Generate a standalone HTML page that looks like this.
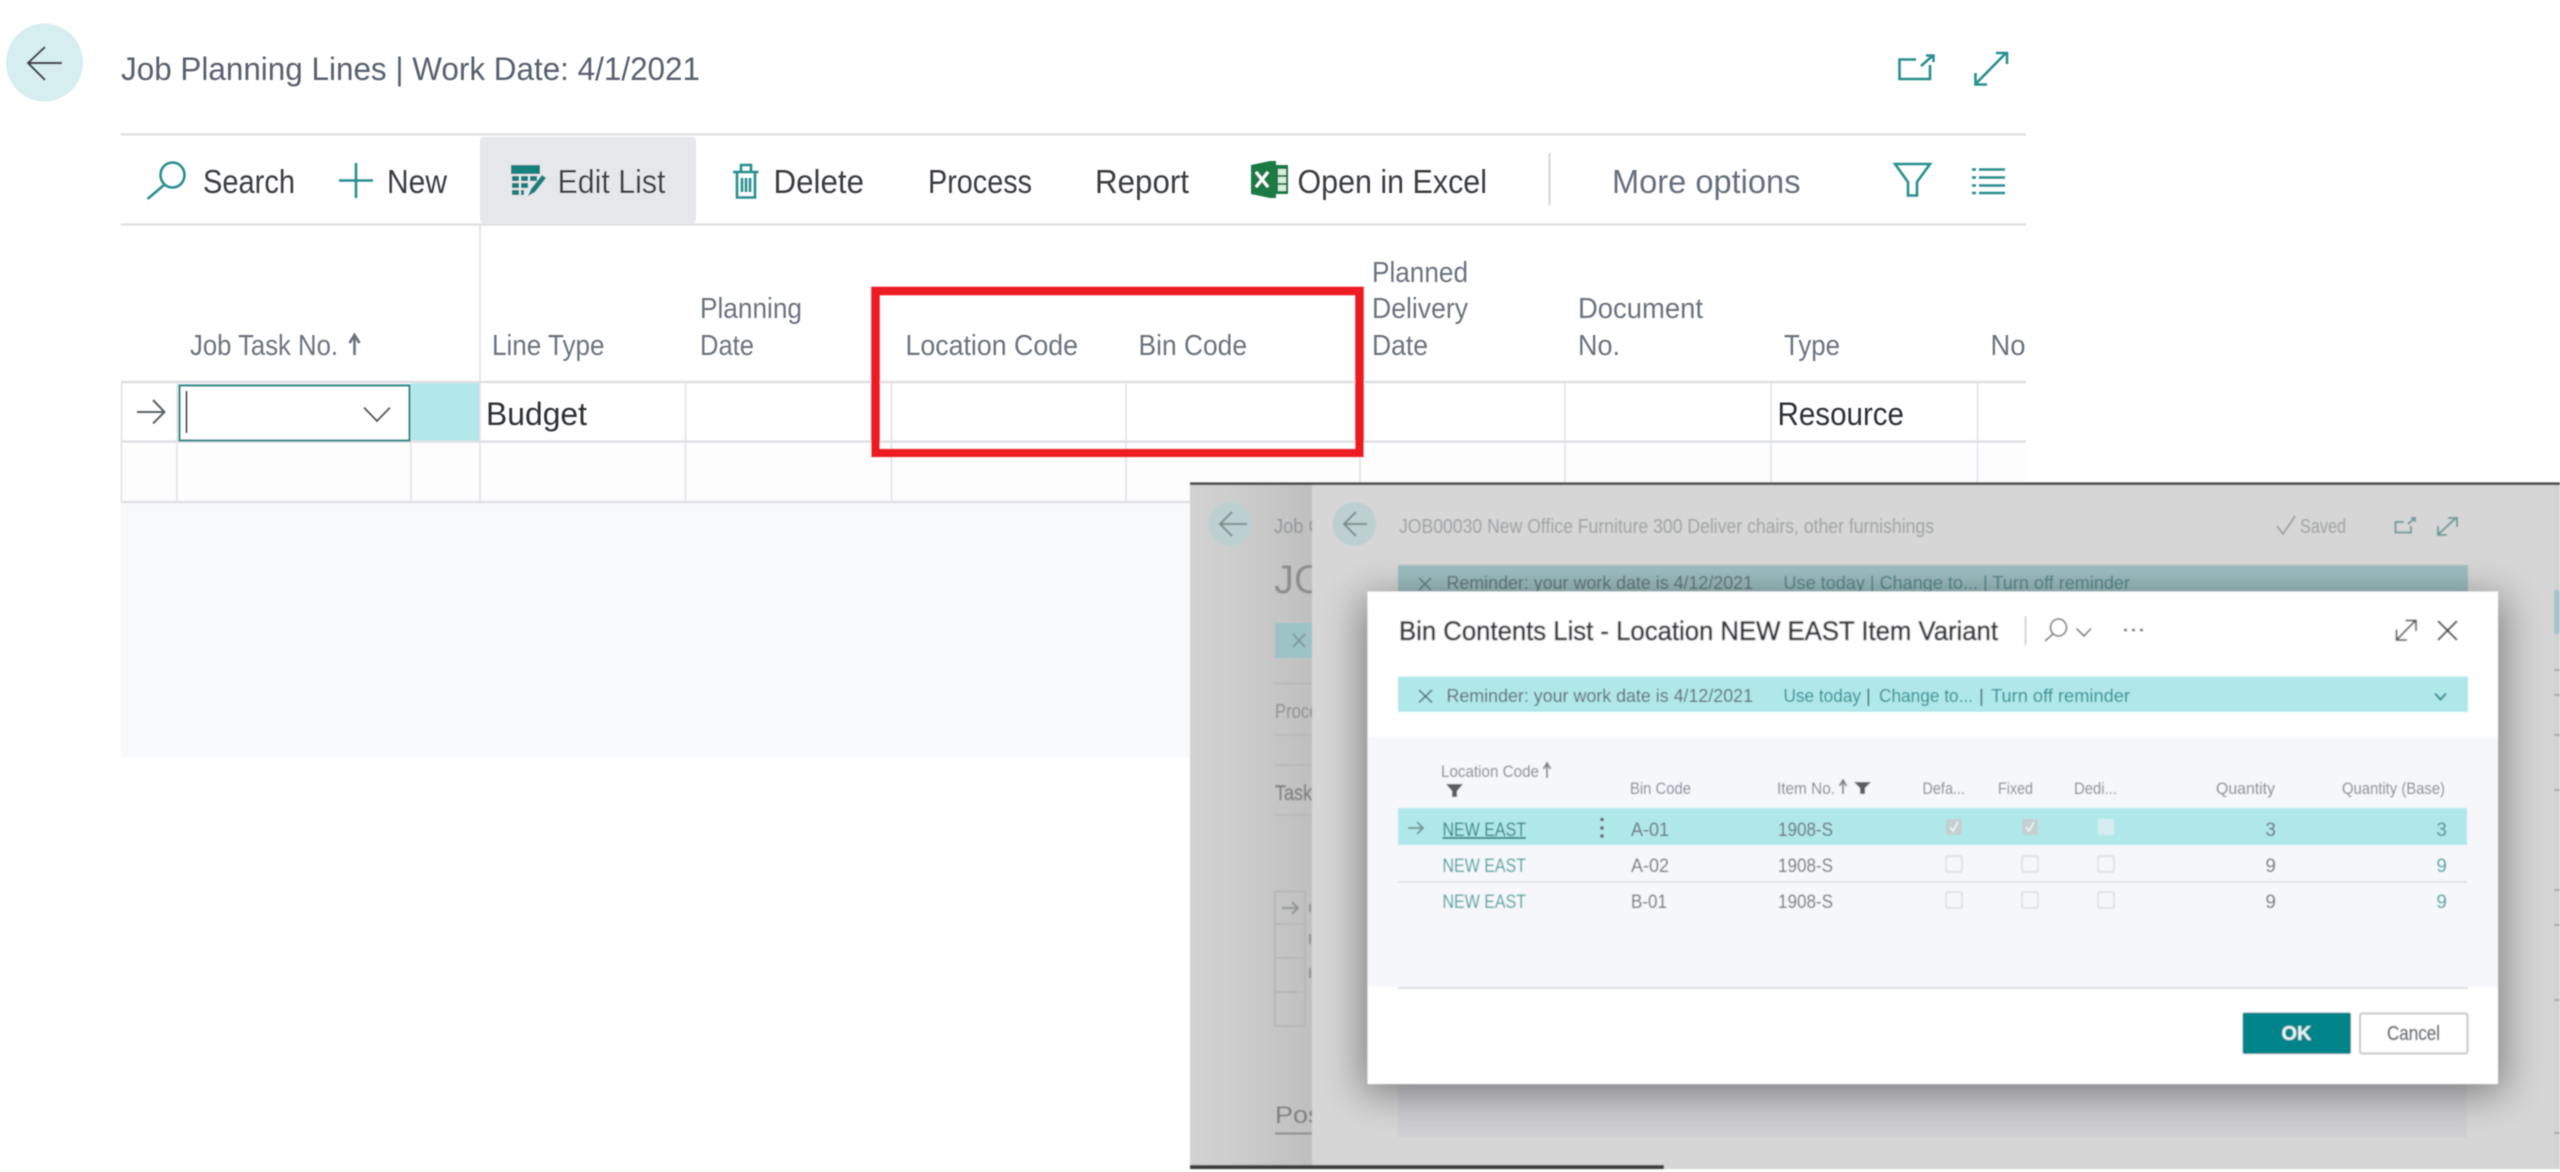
<!DOCTYPE html>
<html lang="en">
<head>
<meta charset="utf-8">
<title>Job Planning Lines</title>
<style>
html,body{margin:0;padding:0;background:#fff;width:2560px;height:1172px;overflow:hidden}
svg{display:block;position:absolute;left:0;top:0}
text{font-family:"Liberation Sans",sans-serif}
.tb{font-size:33px;fill:#3a3d42}
.hd{font-size:29px;fill:#6c7380}
.gr{font-size:32px;fill:#2f3136}
.ic{fill:none;stroke:#2b8f90;stroke-width:2.6}
.vl{stroke:#e2e3e6;stroke-width:1.6}
.hl{stroke:#e0e1e4;stroke-width:2.4}
.sm{font-size:17px;fill:#7b818b}
.rw{font-size:19px;fill:#666b72}
.ln{font-size:19px;fill:#2a9d9a}
.bk{font-size:20px;fill:#9b9fa1}
.rm{font-size:18.5px;fill:#5b6468}
.tl{font-size:18.5px;fill:#1d8a8c}
.cb{fill:#f5f7fa;stroke:#dfe1e4;stroke-width:2}
</style>
</head>
<body>
<svg width="2560" height="1172" viewBox="0 0 2560 1172" xmlns="http://www.w3.org/2000/svg">
<defs>
<linearGradient id="lp" x1="0" x2="1" y1="0" y2="0"><stop offset="0" stop-color="#d2d2d2"/><stop offset=".45" stop-color="#cbcbcb"/><stop offset="1" stop-color="#bfbfbf"/></linearGradient>
<filter id="sh" x="-10%" y="-20%" width="120%" height="140%"><feGaussianBlur stdDeviation="20"/></filter>
<filter id="s1"><feGaussianBlur stdDeviation=".55"/></filter>
<filter id="s2"><feGaussianBlur stdDeviation=".8"/></filter>
<clipPath id="cl"><rect x="1190" y="485" width="122" height="680"/></clipPath>
<clipPath id="cp"><rect x="1190" y="485" width="1370" height="683"/></clipPath>
</defs>

<g filter="url(#s1)">
<!-- header -->
<ellipse cx="44.5" cy="62.5" rx="38.5" ry="39" fill="#d6eef0"/>
<path d="M62,63H28M45,47L28,63L45,80" fill="none" stroke="#3d4347" stroke-width="2.2"/>
<text x="121" y="80" font-size="32" fill="#596170" textLength="579" lengthAdjust="spacingAndGlyphs">Job Planning Lines | Work Date: 4/1/2021</text>
<path class="ic" d="M1916,59.500H1899.500V79H1930V65"/>
<path class="ic" d="M1921,66L1933,55.500M1926,55.500H1933.500V62" stroke-width="2.200"/>
<path class="ic" d="M1975,84.500L2006.500,52.500M1996,53H2007V64M1975.500,73V84.500H1987"/>

<!-- toolbar -->
<line class="hl" x1="121" y1="134.500" x2="2026" y2="134.500"/>
<line class="hl" x1="121" y1="224.500" x2="2026" y2="224.500"/>
<rect x="480" y="137" width="216" height="86" rx="4" fill="#e6e7ea"/>
<ellipse class="ic" cx="172.500" cy="175" rx="12" ry="12.500"/>
<path class="ic" d="M164,185L147.500,199"/>
<text class="tb" x="203" y="193" textLength="92" lengthAdjust="spacingAndGlyphs">Search</text>
<path class="ic" d="M339,180.500H373M356,163V198"/>
<text class="tb" x="387" y="193" textLength="60" lengthAdjust="spacingAndGlyphs">New</text>
<g>
<rect x="511" y="165" width="29" height="9" fill="#16807f"/>
<path d="M512,176h7v5h-7zM521,176h7v5h-7zM530,176h7v5h-7zM512,183h7v5h-7zM521,183h7v5h-7zM512,190h7v5h-7zM521,190h3v5h-3z" fill="#16807f"/>
<path d="M528,196l3,-7l11,-14l4,3l-11,14z" fill="#16807f"/>
</g>
<text class="tb" x="557.500" y="193" textLength="108" lengthAdjust="spacingAndGlyphs">Edit List</text>
<path class="ic" d="M733,172H758.500M741,172V165H751V172M737,172V197.500H755V172M742,178V192M746,178V192M750,178V192" stroke-width="2"/>
<text class="tb" x="773.500" y="193" textLength="90.500" lengthAdjust="spacingAndGlyphs">Delete</text>
<text class="tb" x="928" y="193" textLength="104" lengthAdjust="spacingAndGlyphs">Process</text>
<text class="tb" x="1095" y="193" textLength="94" lengthAdjust="spacingAndGlyphs">Report</text>
<path d="M1251,165L1270,161H1276V198H1270L1251,194Z" fill="#1f7a45"/>
<rect x="1276" y="165" width="12" height="29" fill="#1f7a45"/>
<path d="M1278,169h8v6h-8zM1278,177h8v6h-8zM1278,185h8v6h-8z" fill="#d9ebdf"/>
<path d="M1256,172L1268,187M1268,172L1256,187" stroke="#fff" stroke-width="3" fill="none"/>
<text class="tb" x="1297.500" y="193" textLength="189.500" lengthAdjust="spacingAndGlyphs">Open in Excel</text>
<line x1="1549.500" y1="153" x2="1549.500" y2="205" stroke="#d2d4d7" stroke-width="2"/>
<text x="1612" y="193" font-size="33" fill="#667080" textLength="188.500" lengthAdjust="spacingAndGlyphs">More options</text>
<path class="ic" d="M1895,164H1930L1917,182V195.500H1908V182Z"/>
<path class="ic" d="M1979,169.500H2005M1979,177.500H2005M1979,185.500H2005M1979,193H2005M1972,169.500H1976M1972,177.500H1976M1972,185.500H1976M1972,193H1976"/>

<!-- column headers -->
<line class="vl" x1="480" y1="225" x2="480" y2="382"/>
<text class="hd" x="190" y="355" textLength="148" lengthAdjust="spacingAndGlyphs">Job Task No.</text>
<path d="M354.500,355V336M349.500,343L354.500,335L359.500,343" fill="none" stroke="#6c7380" stroke-width="2.6"/>
<text class="hd" x="492" y="355" textLength="112.500" lengthAdjust="spacingAndGlyphs">Line Type</text>
<text class="hd" x="700" y="318" textLength="102" lengthAdjust="spacingAndGlyphs">Planning</text>
<text class="hd" x="700" y="355" textLength="54" lengthAdjust="spacingAndGlyphs">Date</text>
<text class="hd" x="905.500" y="355" textLength="172.500" lengthAdjust="spacingAndGlyphs">Location Code</text>
<text class="hd" x="1138.500" y="355" textLength="108.500" lengthAdjust="spacingAndGlyphs">Bin Code</text>
<text class="hd" x="1372" y="282" textLength="96" lengthAdjust="spacingAndGlyphs">Planned</text>
<text class="hd" x="1372" y="318" textLength="96" lengthAdjust="spacingAndGlyphs">Delivery</text>
<text class="hd" x="1372" y="355" textLength="56" lengthAdjust="spacingAndGlyphs">Date</text>
<text class="hd" x="1578" y="318" textLength="125" lengthAdjust="spacingAndGlyphs">Document</text>
<text class="hd" x="1578" y="355" textLength="42" lengthAdjust="spacingAndGlyphs">No.</text>
<text class="hd" x="1784" y="355" textLength="56" lengthAdjust="spacingAndGlyphs">Type</text>
<text class="hd" x="1990.500" y="355" textLength="35" lengthAdjust="spacingAndGlyphs">No</text>

<!-- grid -->
<rect x="121" y="503" width="1069" height="254" fill="#f8f9fb"/>
<rect x="121" y="442" width="1905" height="60" fill="#fdfdfe"/>
<rect x="411" y="383" width="69" height="58" fill="#b2e8ea"/>
<g class="vl">
<line class="vl" x1="121.500" y1="382" x2="121.500" y2="502"/>
<line class="vl" x1="177" y1="382" x2="177" y2="502"/>
<line class="vl" x1="411" y1="441" x2="411" y2="502"/>
<line class="vl" x1="480" y1="382" x2="480" y2="502"/>
<line class="vl" x1="685.500" y1="382" x2="685.500" y2="502"/>
<line class="vl" x1="891.500" y1="382" x2="891.500" y2="502"/>
<line class="vl" x1="1126" y1="382" x2="1126" y2="502"/>
<line class="vl" x1="1360" y1="382" x2="1360" y2="502"/>
<line class="vl" x1="1565" y1="382" x2="1565" y2="502"/>
<line class="vl" x1="1771" y1="382" x2="1771" y2="502"/>
<line class="vl" x1="1977.500" y1="382" x2="1977.500" y2="502"/>
</g>
<line class="hl" x1="121" y1="382" x2="2026" y2="382"/>
<line class="hl" x1="121" y1="441.500" x2="2026" y2="441.500"/>
<line class="hl" x1="121" y1="502" x2="2026" y2="502"/>
<rect x="179.500" y="385.500" width="230" height="55" fill="#fff" stroke="#2a8a8a" stroke-width="2.200"/>
<line x1="186.500" y1="391" x2="186.500" y2="433" stroke="#444" stroke-width="2"/>
<path d="M364,407.500L377,421L390,407.500" fill="none" stroke="#555" stroke-width="2"/>
<path d="M137,412H164M153,400L164.500,412L153,423.500" fill="none" stroke="#5d6468" stroke-width="2"/>
<text class="gr" x="486" y="425" textLength="101" lengthAdjust="spacingAndGlyphs">Budget</text>
<text class="gr" x="1777.500" y="425" textLength="126.500" lengthAdjust="spacingAndGlyphs">Resource</text>

<!-- red highlight -->
<rect x="875.500" y="291" width="484" height="162" fill="none" stroke="#ed1c24" stroke-width="8.500"/>
</g>

<!-- overlay screenshot -->
<g filter="url(#s2)">
<rect x="1190" y="483" width="1370" height="686" fill="#d6d6d6"/>
<rect x="1190" y="485" width="122" height="680" fill="url(#lp)"/>
<rect x="2554" y="485" width="6" height="680" fill="#d2d2d2"/>
<path d="M2554,590h6v44h-6z" fill="#a4c6c8"/>
<path d="M2554,670h6M2554,695h6M2554,735h6M2554,790h6M2554,890h6M2554,925h6M2554,1000h6M2554,1133h6" stroke="#aaa" stroke-width="2"/>

<!-- left back panel -->
<ellipse cx="1230" cy="524" rx="21.500" ry="22" fill="#bcd0d2"/>
<path d="M1247,524H1221M1232,512L1220,524L1232,536" fill="none" stroke="#7d8a8c" stroke-width="2"/>
<g clip-path="url(#cl)">
<text class="bk" x="1274" y="533" textLength="74" lengthAdjust="spacingAndGlyphs" style="fill:#8f9396">Job Card</text>
<text x="1274" y="593" font-size="40" fill="#8c8c8c">JOB</text>
<rect x="1275" y="623" width="40" height="35" fill="#9cc3c6"/>
<path d="M1293,634L1305,647M1305,634L1293,647" stroke="#7f9a9c" stroke-width="2"/>
<path d="M1275,683.500H1312M1275,735H1312M1275,765H1312M1275,815H1312" stroke="#b6b6b6" stroke-width="1.600"/>
<text x="1275" y="718" font-size="20" fill="#8d8d8d" textLength="60" lengthAdjust="spacingAndGlyphs">Process</text>
<text x="1275" y="800" font-size="21" fill="#808080" stroke="#808080" stroke-width=".4" textLength="37" lengthAdjust="spacingAndGlyphs">Task</text>
<path d="M1275,891.500H1305V1026H1275ZM1275,924H1305M1275,958H1305M1275,992H1305" fill="none" stroke="#b3b3b3" stroke-width="1.500"/>
<path d="M1282,908H1298M1292,902L1298,908L1292,914" fill="none" stroke="#8e9496" stroke-width="2"/>
<path d="M1310,904v8M1310,934v10M1310,968v10" stroke="#8f8f8f" stroke-width="2"/>
<text x="1275" y="1123" font-size="24" fill="#7c7c7c" textLength="90" lengthAdjust="spacingAndGlyphs">Posting</text>
<path d="M1275,1133.500H1312" stroke="#8a8a8a" stroke-width="2"/>
</g>

<!-- inner back panel -->
<rect x="1398" y="1084" width="1069" height="53" fill="#cfcfd3"/>
<ellipse cx="1354.500" cy="524" rx="22" ry="22" fill="#bcd0d2"/>
<path d="M1367,524H1345M1356,512L1344,524L1356,536" fill="none" stroke="#7d8a8c" stroke-width="2"/>
<text class="bk" x="1399" y="533" textLength="535" lengthAdjust="spacingAndGlyphs">JOB00030 New Office Furniture 300 Deliver chairs, other furnishings</text>
<path d="M2277,526L2283,534L2295,516" fill="none" stroke="#999" stroke-width="1.600"/>
<text class="bk" x="2300" y="533" textLength="46" lengthAdjust="spacingAndGlyphs">Saved</text>
<path d="M2404,522H2395.500V532.500H2411V526M2408,524L2415,518M2411,518H2415V522" fill="none" stroke="#6e9b9c" stroke-width="2"/>
<path d="M2438,534.500L2456,518M2448,518H2457V527M2438,526V535H2447" fill="none" stroke="#6e9b9c" stroke-width="2"/>
<rect x="1398" y="565" width="1070" height="30" fill="#9dbec0"/>
<path d="M1419,578L1431,590M1431,578L1419,590" stroke="#6b8184" stroke-width="1.600"/>
<text class="rm" x="1446.500" y="589" textLength="306.500" lengthAdjust="spacingAndGlyphs" style="fill:#5f7276">Reminder: your work date is 4/12/2021</text>
<text class="tl" x="1783.500" y="589" textLength="346.500" lengthAdjust="spacingAndGlyphs" style="fill:#4f8587">Use today | Change to... | Turn off reminder</text>

<!-- modal shadow -->
<g clip-path="url(#cp)"><rect x="1362" y="597" width="1142" height="497" fill="#000" opacity=".4" filter="url(#sh)"/></g>

<!-- modal -->
<rect x="1367.500" y="591.500" width="1130.500" height="492.500" fill="#fff"/>
<rect x="1368" y="737" width="1130" height="250" fill="#f5f7fb"/>
<text x="1399" y="640" font-size="27" fill="#33353a" textLength="599" lengthAdjust="spacingAndGlyphs" style="stroke:#33353a;stroke-width:.6">Bin Contents List - Location NEW EAST Item Variant</text>
<line x1="2025.500" y1="616" x2="2025.500" y2="645" stroke="#c8c8c8" stroke-width="1.600"/>
<ellipse cx="2058.500" cy="627.500" rx="8" ry="8.500" fill="none" stroke="#666" stroke-width="1.600"/>
<path d="M2053,634L2045,641M2076.500,628.500L2084,636L2091,628.500" fill="none" stroke="#666" stroke-width="1.600"/>
<path d="M2124,630h3M2132,630h3M2140,630h3" stroke="#666" stroke-width="2.400"/>
<path d="M2397,639.500L2415,621M2405.500,620.500H2416V631M2396.500,629.500V640H2407" fill="none" stroke="#555" stroke-width="1.800"/>
<path d="M2438,621L2457,640M2457,621L2438,640" stroke="#444" stroke-width="2"/>

<rect x="1398" y="676.500" width="1070" height="35.500" fill="#b0e8ea"/>
<path d="M1419,690L1432,702.500M1432,690L1419,702.500" stroke="#4e7375" stroke-width="1.600"/>
<text class="rm" x="1446.500" y="702" textLength="306.500" lengthAdjust="spacingAndGlyphs">Reminder: your work date is 4/12/2021</text>
<text class="tl" x="1783.500" y="702" textLength="77.500" lengthAdjust="spacingAndGlyphs">Use today</text>
<text class="tl" x="1866" y="702" style="fill:#2d5a5c">|</text>
<text class="tl" x="1879" y="702" textLength="94" lengthAdjust="spacingAndGlyphs">Change to...</text>
<text class="tl" x="1979" y="702" style="fill:#2d5a5c">|</text>
<text class="tl" x="1991" y="702" textLength="139" lengthAdjust="spacingAndGlyphs">Turn off reminder</text>
<path d="M2435,693.500L2440.500,699.500L2446,693.500" fill="none" stroke="#1d8a8c" stroke-width="2"/>

<!-- list headers -->
<text class="sm" x="1441" y="777" textLength="98" lengthAdjust="spacingAndGlyphs">Location Code</text>
<path d="M1547,778V764M1543.500,769L1547,763L1550.500,769" fill="none" stroke="#7b818b" stroke-width="1.800"/>
<path d="M1446,784H1463L1457,791V797H1452V791Z" fill="#5a5d61"/>
<text class="sm" x="1630" y="794" textLength="61" lengthAdjust="spacingAndGlyphs">Bin Code</text>
<text class="sm" x="1777" y="794" textLength="58" lengthAdjust="spacingAndGlyphs">Item No.</text>
<path d="M1843,794V781M1839.500,786L1843,780L1846.500,786" fill="none" stroke="#7b818b" stroke-width="1.800"/>
<path d="M1854,782H1871L1865,788V794H1860V788Z" fill="#5a5d61"/>
<text class="sm" x="1922.500" y="794" textLength="42.500" lengthAdjust="spacingAndGlyphs">Defa...</text>
<text class="sm" x="1998" y="794" textLength="35" lengthAdjust="spacingAndGlyphs">Fixed</text>
<text class="sm" x="2074" y="794" textLength="43" lengthAdjust="spacingAndGlyphs">Dedi...</text>
<text class="sm" x="2216" y="794" textLength="59" lengthAdjust="spacingAndGlyphs">Quantity</text>
<text class="sm" x="2342" y="794" textLength="103" lengthAdjust="spacingAndGlyphs">Quantity (Base)</text>

<!-- rows -->
<rect x="1398" y="808" width="1069" height="37" fill="#b0e8ea"/>
<line x1="1398" y1="882" x2="2467" y2="882" stroke="#e0e2e6" stroke-width="2"/>
<path d="M1408,828H1423M1417,822L1423,828L1417,834" fill="none" stroke="#70908f" stroke-width="1.800"/>
<text x="1442.500" y="836" font-size="19" fill="#1d7f80" text-decoration="underline" textLength="83.500" lengthAdjust="spacingAndGlyphs">NEW EAST</text>
<circle cx="1602" cy="819.500" r="1.800" fill="#555"/><circle cx="1602" cy="828" r="1.800" fill="#555"/><circle cx="1602" cy="836" r="1.800" fill="#555"/>
<text class="rw" x="1631" y="836" textLength="38" lengthAdjust="spacingAndGlyphs">A-01</text>
<text class="rw" x="1778" y="836" textLength="55" lengthAdjust="spacingAndGlyphs">1908-S</text>
<rect x="1946" y="819" width="16" height="16" rx="2" fill="#c3cfd1"/><path d="M1950,827L1953,831L1958,822" fill="none" stroke="#f1f5f5" stroke-width="1.800"/>
<rect x="2022" y="819" width="16" height="16" rx="2" fill="#c3cfd1"/><path d="M2026,827L2029,831L2034,822" fill="none" stroke="#f1f5f5" stroke-width="1.800"/>
<rect x="2098" y="819" width="16" height="16" rx="2" fill="#d6edef"/>
<text class="rw" x="2276" y="836" text-anchor="end">3</text>
<text class="rw" x="2447" y="836" text-anchor="end" style="fill:#4f8a8e">3</text>

<text class="ln" x="1442.500" y="872" textLength="83.500" lengthAdjust="spacingAndGlyphs">NEW EAST</text>
<text class="rw" x="1631" y="872" textLength="38" lengthAdjust="spacingAndGlyphs">A-02</text>
<text class="rw" x="1778" y="872" textLength="55" lengthAdjust="spacingAndGlyphs">1908-S</text>
<rect class="cb" x="1946" y="856" width="16" height="16" rx="2"/><rect class="cb" x="2022" y="856" width="16" height="16" rx="2"/><rect class="cb" x="2098" y="856" width="16" height="16" rx="2"/>
<text class="rw" x="2276" y="872" text-anchor="end">9</text>
<text class="ln" x="2447" y="872" text-anchor="end">9</text>

<text class="ln" x="1442.500" y="908" textLength="83.500" lengthAdjust="spacingAndGlyphs">NEW EAST</text>
<text class="rw" x="1631" y="908" textLength="36" lengthAdjust="spacingAndGlyphs">B-01</text>
<text class="rw" x="1778" y="908" textLength="55" lengthAdjust="spacingAndGlyphs">1908-S</text>
<rect class="cb" x="1946" y="892" width="16" height="16" rx="2"/><rect class="cb" x="2022" y="892" width="16" height="16" rx="2"/><rect class="cb" x="2098" y="892" width="16" height="16" rx="2"/>
<text class="rw" x="2276" y="908" text-anchor="end">9</text>
<text class="ln" x="2447" y="908" text-anchor="end">9</text>

<line x1="1398" y1="988" x2="2468" y2="988" stroke="#dcdde0" stroke-width="2"/>

<!-- buttons -->
<rect x="2242.500" y="1012.500" width="108.500" height="41.500" rx="2" fill="#008489"/>
<text x="2296.500" y="1040" font-size="20" font-weight="bold" fill="#fff" text-anchor="middle" opacity=".92">OK</text>
<rect x="2360" y="1013.500" width="107.500" height="40" rx="2" fill="#fff" stroke="#c4c6c8" stroke-width="2"/>
<text x="2387" y="1040" font-size="20" fill="#555a5e" textLength="53" lengthAdjust="spacingAndGlyphs" style="stroke:#555a5e;stroke-width:.3">Cancel</text>

<!-- black edge lines -->
<rect x="1190" y="482.500" width="1370" height="2.500" fill="#3a3a3a"/>
<rect x="1190" y="1165" width="474" height="4" fill="#3a3a3a"/>
</g>
</svg>
</body>
</html>
